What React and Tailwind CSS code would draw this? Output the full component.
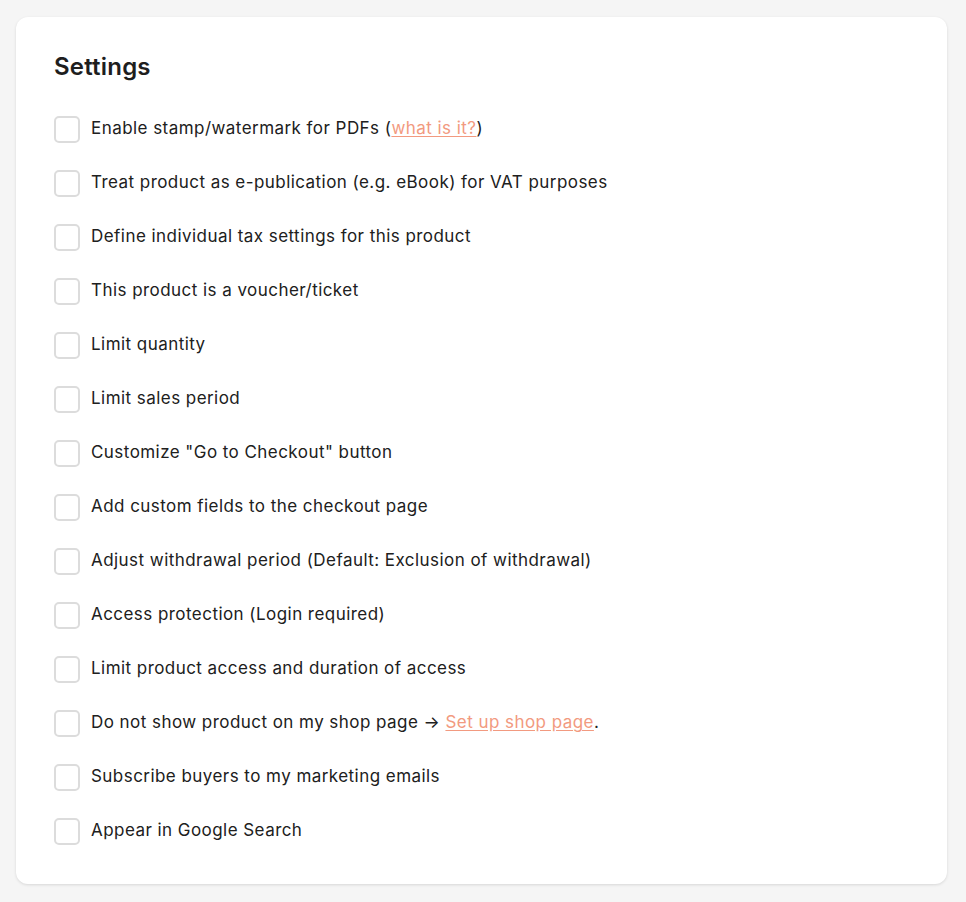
import React from 'react';

const options = [
    { label: <>Enable stamp/watermark for PDFs (<a href="#" className="text-[#f29a80] underline underline-offset-2">what is it?</a>)</> },
    { label: 'Treat product as e-publication (e.g. eBook) for VAT purposes' },
    { label: 'Define individual tax settings for this product' },
    { label: 'This product is a voucher/ticket' },
    { label: 'Limit quantity' },
    { label: 'Limit sales period' },
    { label: 'Customize "Go to Checkout" button' },
    { label: 'Add custom fields to the checkout page' },
    { label: 'Adjust withdrawal period (Default: Exclusion of withdrawal)' },
    { label: 'Access protection (Login required)' },
    { label: 'Limit product access and duration of access' },
    { label: <>Do not show product on my shop page → <a href="#" className="text-[#f29a80] underline underline-offset-2">Set up shop page</a>.</> },
    { label: 'Subscribe buyers to my marketing emails' },
    { label: 'Appear in Google Search' },
];

const CheckRow = ({ label }) => (
    <label className="flex items-center h-[54px] gap-[11px] cursor-pointer">
        <input type="checkbox" className="peer sr-only" />
        <span className="w-[26px] h-[27px] rounded-[5px] border-2 border-[#dcdcdc] bg-white flex-shrink-0" />
        <span className="text-[17px] text-[#202020] tracking-[0.45px]">{label}</span>
    </label>
);

export default function App() {
    return (
        <div className="min-h-[902px] bg-[#f5f5f5] pt-[17px] pl-[16px] pr-[19px] pb-[17px]" style={{ fontFamily: 'Inter, "Noto Sans", sans-serif' }}>
            <div className="bg-white rounded-[12px] shadow-[0_1px_3px_rgba(0,0,0,0.12)] px-[38px] pt-[35px] pb-[26px]">
                <h2 className="text-[24px] leading-[30px] font-semibold text-[#1e1e1e] tracking-[0.2px]">Settings</h2>
                <div className="mt-[20px] flex flex-col">
                    {options.map((o, i) => (
                        <CheckRow key={i} label={o.label} />
                    ))}
                </div>
            </div>
        </div>
    );
}
